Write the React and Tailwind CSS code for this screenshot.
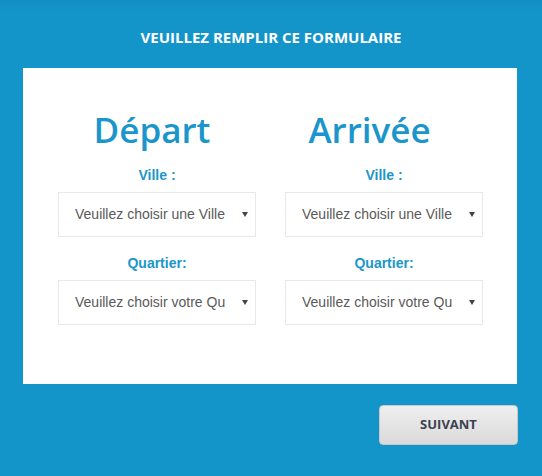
const Arrow = () => (
  <svg width="6" height="5" viewBox="0 0 6 5" className="shrink-0">
    <path d="M0 0 H6 L3 5 Z" fill="#444" />
  </svg>
);

function FakeSelect({ text }) {
  return (
    <div className="flex h-[45px] items-center border border-[#e8e8e8] bg-white pl-[16px] pr-[7px]">
      <span className="w-[150px] overflow-hidden whitespace-nowrap text-[14px] text-[#5a5a5a] font-['Liberation_Sans',Arial,sans-serif]">
        {text}
      </span>
      <span className="ml-auto">
        <Arrow />
      </span>
    </div>
  );
}

function Column({ title, titleShift }) {
  return (
    <div className="flex flex-col">
      <h2 className={`text-center text-[35px] font-semibold leading-[48px] text-[#1a96cc] font-['Open_Sans',sans-serif] ${titleShift}`}>
        {title}
      </h2>
      <label className="mt-[13px] text-center text-[14px] font-bold leading-[16px] text-[#1a96cc] font-['Liberation_Sans',Arial,sans-serif]">
        Ville :
      </label>
      <div className="mt-[9px]">
        <FakeSelect text="Veuillez choisir une Ville" />
      </div>
      <label className="mt-[18px] text-center text-[14px] font-bold leading-[16px] text-[#1a96cc] font-['Liberation_Sans',Arial,sans-serif]">
        Quartier:
      </label>
      <div className="mt-[9px]">
        <FakeSelect text="Veuillez choisir votre Quartier" />
      </div>
    </div>
  );
}

export default function App() {
  return (
    <div className="flex min-h-[476px] flex-col bg-[#1395ca] bg-gradient-to-b from-[#1290c4] via-[#1395ca] via-[3%] to-[#1395ca]">
      <h1 className="pt-[27px] text-center text-[15px] font-bold leading-[20px] text-white font-['Open_Sans',sans-serif]">
        VEUILLEZ REMPLIR CE FORMULAIRE
      </h1>
      <div className="mt-[21px] ml-[23px] w-[494px] bg-white px-[35px] pt-[38px] pb-[59px]">
        <div className="grid grid-cols-[198px_198px] gap-x-[29px]">
          <Column title="Départ" titleShift="pr-[10px]" />
          <Column title="Arrivée" titleShift="pr-[29px]" />
        </div>
      </div>
      <div className="mt-[21px] flex justify-end pr-[24px]">
        <button className="h-[40px] w-[139px] rounded-[4px] border border-[#c8c8c8] bg-gradient-to-b from-[#efefef] to-[#dadada] text-[13px] font-bold text-[#3c4250] font-['Open_Sans',sans-serif]">
          SUIVANT
        </button>
      </div>
    </div>
  );
}
